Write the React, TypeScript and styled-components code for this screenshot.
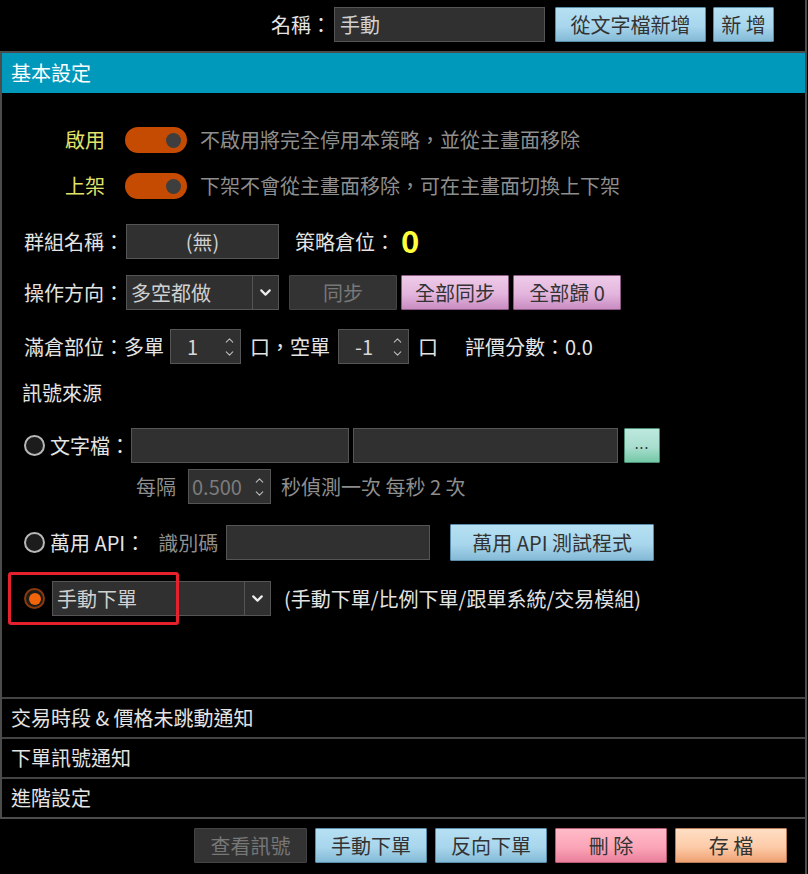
import styled, { createGlobalStyle, css } from 'styled-components'
import { ChevronDown, ChevronUp } from 'lucide-react'

type Tone = 'blue' | 'pink' | 'red' | 'peach' | 'mint' | 'off'

const GlobalStyle = createGlobalStyle`
  html, body {
    margin: 0;
    background: #000;
  }
  body {
    font-family: "Noto Sans CJK TC", "Noto Sans", sans-serif;
    font-size: 20px;
    line-height: 1.2;
    color: #e4e4e4;
  }
  * {
    box-sizing: border-box;
  }
`

const tones = {
  blue: css`
    background: linear-gradient(#b6e0f3, #a8d6ed 55%, #84bad6);
    border-color: #5a8ea8;
    color: #333;
  `,
  pink: css`
    background: linear-gradient(#eecbe8, #e3b5dd 55%, #c98cc2);
    border-color: #8c5c86;
    color: #333;
  `,
  red: css`
    background: linear-gradient(#ffbac8, #fba5b8 55%, #ea809b);
    border-color: #b45c72;
    color: #333;
  `,
  peach: css`
    background: linear-gradient(#ffdec4, #fdcba8 55%, #eda172);
    border-color: #b87c58;
    color: #333;
  `,
  mint: css`
    background: linear-gradient(#bde8dd, #a8decf 55%, #74c8a6);
    border-color: #4c8c74;
    color: #333;
  `,
  off: css`
    background: #333;
    border-color: #444;
    color: #777;
  `
}

const Page = styled.div`
  width: 807px;
  height: 874px;
  border-right: 2px solid #4c4c4c;
  display: flex;
  flex-direction: column;
`

const TopBar = styled.div`
  height: 51px;
  display: flex;
  align-items: center;
  justify-content: flex-end;
  padding: 0 31px 2px 0;
`

const Label = styled.span<{ $tone?: 'muted' | 'yellow' }>`
  white-space: nowrap;
  color: ${({ $tone }) => ($tone === 'muted' ? '#8e8e8e' : $tone === 'yellow' ? '#e2e46a' : '#e4e4e4')};
`

const TextBox = styled.div<{ $w: number; $center?: boolean; $muted?: boolean }>`
  width: ${({ $w }) => $w}px;
  height: 35px;
  background: #303030;
  border: 1px solid #555;
  display: flex;
  align-items: center;
  justify-content: ${({ $center }) => ($center ? 'center' : 'flex-start')};
  padding: 0 5px;
  color: ${({ $muted }) => ($muted ? '#7c7c7c' : '#d0d0d0')};
  white-space: nowrap;
`

const Button = styled.button<{ $tone: Tone; $w: number; $h?: number }>`
  width: ${({ $w }) => $w}px;
  height: ${({ $h }) => $h ?? 35}px;
  border: 1px solid;
  border-radius: 1px;
  font: inherit;
  padding: 0;
  white-space: pre;
  display: flex;
  align-items: center;
  justify-content: center;
  ${({ $tone }) => tones[$tone]}
`

const Panel = styled.div`
  border-left: 2px solid #4c4c4c;
  border-top: 2px solid #4c4c4c;
  border-bottom: 2px solid #4c4c4c;
`

const PanelHeader = styled.div`
  height: 40px;
  background: #0199bb;
  color: #fff;
  display: flex;
  align-items: center;
  padding-left: 9px;
`

const PanelBody = styled.div`
  height: 604px;
  padding: 24px 0 0 22px;
  display: flex;
  flex-direction: column;
`

const ToggleRow = styled.div`
  height: 46px;
  display: flex;
  align-items: center;
`

const ToggleLabel = styled(Label)`
  width: 81px;
  text-align: right;
  margin-right: 20px;
`

const Toggle = styled.div`
  width: 62px;
  height: 26px;
  border-radius: 13px;
  background: #c54b02;
  display: flex;
  align-items: center;
  justify-content: flex-end;
  padding-right: 6px;
  margin-right: 13px;

  &::after {
    content: '';
    width: 15px;
    height: 15px;
    border-radius: 50%;
    background: #3e3e3e;
  }
`

const Row = styled.div<{ $mt: number; $indent?: number }>`
  position: relative;
  height: 35px;
  margin-top: ${({ $mt }) => $mt}px;
  margin-left: ${({ $indent }) => $indent ?? 0}px;
  display: flex;
  align-items: center;
`

const Gap = styled.span<{ $w: number }>`
  display: inline-block;
  flex: none;
  width: ${({ $w }) => $w}px;
`

const BigNumber = styled.span`
  color: #ffff3a;
  font-size: 31px;
  line-height: 1;
  font-weight: 700;
  margin: -4px 0 0 6px;
`

const Select = styled.div<{ $w: number }>`
  width: ${({ $w }) => $w}px;
  height: 35px;
  background: #303030;
  border: 1px solid #555;
  display: flex;
  color: #d0d0d0;
`

const SelectValue = styled.div`
  flex: 1;
  display: flex;
  align-items: center;
  padding-left: 4px;
`

const SelectArrow = styled.div`
  width: 26px;
  border-left: 1px solid #555;
  display: flex;
  align-items: center;
  justify-content: center;
  color: #eee;
`

const Spin = styled.div<{ $w: number; $muted?: boolean }>`
  width: ${({ $w }) => $w}px;
  height: 35px;
  background: #303030;
  border: 1px solid #555;
  display: flex;
  align-items: center;
  justify-content: space-between;
  padding: 0 4px 0 ${({ $muted }) => ($muted ? 3 : 16)}px;
  color: ${({ $muted }) => ($muted ? '#7c7c7c' : '#d8d8d8')};
`

const SpinArrows = styled.div`
  display: flex;
  flex-direction: column;
  align-items: center;
  color: #bbb;
  line-height: 0;
`

const SectionTitle = styled.div`
  height: 30px;
  margin-top: 14px;
  margin-left: -2px;
  display: flex;
  align-items: center;
`

const Radio = styled.span<{ $on?: boolean }>`
  width: 21px;
  height: 21px;
  flex: none;
  border-radius: 50%;
  border: 2px solid ${({ $on }) => ($on ? '#8a3a08' : '#b8b8b8')};
  background: #1c1c1c;
  display: flex;
  align-items: center;
  justify-content: center;
  margin-right: ${({ $on }) => ($on ? 7 : 5)}px;

  &::after {
    content: '';
    display: ${({ $on }) => ($on ? 'block' : 'none')};
    width: 12px;
    height: 12px;
    border-radius: 50%;
    background: #f2640a;
  }
`

const Highlight = styled.div`
  position: absolute;
  left: -16px;
  top: -9px;
  width: 171px;
  height: 53px;
  border: 3px solid #e4212c;
  border-radius: 3px;
  pointer-events: none;
`

const Dots = styled.span`
  font-size: 14px;
  letter-spacing: 1px;
  color: #333;
  margin-top: -4px;
`

const Section = styled.div`
  height: 40px;
  border-top: 2px solid #444;
  display: flex;
  align-items: center;
  padding-left: 9px;
`

const Footer = styled.div`
  display: flex;
  justify-content: flex-end;
  gap: 8px;
  padding: 9px 18px 0 0;
`

function Arrow() {
  return (
    <SelectArrow>
      <ChevronDown size={17} strokeWidth={3} />
    </SelectArrow>
  )
}

function Stepper({ value, w, muted }: { value: string; w: number; muted?: boolean }) {
  return (
    <Spin $w={w} $muted={muted}>
      <span>{value}</span>
      <SpinArrows>
        <ChevronUp size={13} strokeWidth={2} />
        <ChevronDown size={13} strokeWidth={2} />
      </SpinArrows>
    </Spin>
  )
}

export default function App() {
  return (
    <>
      <GlobalStyle />
      <Page>
        <TopBar>
          <Label>名稱：</Label>
          <Gap $w={3} />
          <TextBox $w={211}>手動</TextBox>
          <Gap $w={10} />
          <Button $tone="blue" $w={151}>從文字檔新增</Button>
          <Gap $w={7} />
          <Button $tone="blue" $w={61}>{'新 增'}</Button>
        </TopBar>

        <Panel>
          <PanelHeader>基本設定</PanelHeader>
          <PanelBody>
            <ToggleRow>
              <ToggleLabel $tone="yellow">啟用</ToggleLabel>
              <Toggle />
              <Label $tone="muted">不啟用將完全停用本策略，並從主畫面移除</Label>
            </ToggleRow>
            <ToggleRow>
              <ToggleLabel $tone="yellow">上架</ToggleLabel>
              <Toggle />
              <Label $tone="muted">下架不會從主畫面移除，可在主畫面切換上下架</Label>
            </ToggleRow>

            <Row $mt={15}>
              <Label>群組名稱：</Label>
              <Gap $w={2} />
              <TextBox $w={153} $center>(無)</TextBox>
              <Gap $w={16} />
              <Label>策略倉位：</Label>
              <BigNumber>0</BigNumber>
            </Row>

            <Row $mt={16}>
              <Label>操作方向：</Label>
              <Gap $w={2} />
              <Select $w={153}>
                <SelectValue>多空都做</SelectValue>
                <Arrow />
              </Select>
              <Gap $w={10} />
              <Button $tone="off" $w={108}>同步</Button>
              <Gap $w={4} />
              <Button $tone="pink" $w={108}>全部同步</Button>
              <Gap $w={4} />
              <Button $tone="pink" $w={108}>全部歸 0</Button>
            </Row>

            <Row $mt={19}>
              <Label>滿倉部位：多單</Label>
              <Gap $w={6} />
              <Stepper value="1" w={71} />
              <Gap $w={9} />
              <Label>口，空單</Label>
              <Gap $w={8} />
              <Stepper value="-1" w={71} />
              <Gap $w={9} />
              <Label>口</Label>
              <Gap $w={27} />
              <Label>評價分數：0.0</Label>
            </Row>

            <SectionTitle>訊號來源</SectionTitle>

            <Row $mt={20}>
              <Radio />
              <Label>文字檔：</Label>
              <Gap $w={1} />
              <TextBox $w={218} />
              <Gap $w={4} />
              <TextBox $w={265} />
              <Gap $w={6} />
              <Button $tone="mint" $w={36}>
                <Dots>...</Dots>
              </Button>
            </Row>

            <Row $mt={6} $indent={112}>
              <Label $tone="muted">每隔</Label>
              <Gap $w={12} />
              <Stepper value="0.500" w={83} muted />
              <Gap $w={10} />
              <Label $tone="muted">秒偵測一次 每秒 2 次</Label>
            </Row>

            <Row $mt={21}>
              <Radio />
              <Label>萬用 API：</Label>
              <Gap $w={13} />
              <Label $tone="muted">識別碼</Label>
              <Gap $w={8} />
              <TextBox $w={204} />
              <Gap $w={20} />
              <Button $tone="blue" $w={204} $h={37}>萬用 API 測試程式</Button>
            </Row>

            <Row $mt={21}>
              <Highlight />
              <Radio $on />
              <Select $w={219}>
                <SelectValue>手動下單</SelectValue>
                <Arrow />
              </Select>
              <Gap $w={13} />
              <Label>(手動下單/比例下單/跟單系統/交易模組)</Label>
            </Row>
          </PanelBody>

          <Section>交易時段 &amp; 價格未跳動通知</Section>
          <Section>下單訊號通知</Section>
          <Section>進階設定</Section>
        </Panel>

        <Footer>
          <Button $tone="off" $w={113}>查看訊號</Button>
          <Button $tone="blue" $w={112}>手動下單</Button>
          <Button $tone="blue" $w={112}>反向下單</Button>
          <Button $tone="red" $w={112}>{'刪 除'}</Button>
          <Button $tone="peach" $w={112}>{'存 檔'}</Button>
        </Footer>
      </Page>
    </>
  )
}
